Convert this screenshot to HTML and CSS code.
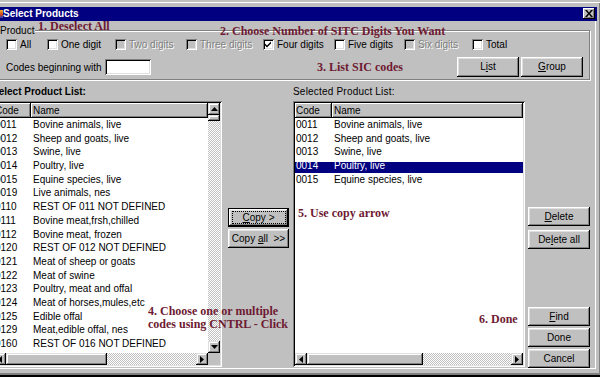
FILE: index.html
```html
<!DOCTYPE html>
<html>
<head>
<meta charset="utf-8">
<title>Select Products</title>
<link rel="stylesheet" href="styles.css">
</head>
<body>
<div class="window">
  <div class="titlebar">
    <span class="app-icon"></span>
    <span class="title">Select Products</span>
    <span class="close"><svg width="8" height="7" viewBox="0 0 8 7"><path d="M0 0h2l2 2.4L6 0h2L5 3.5 8 7H6L4 4.6 2 7H0l3-3.5z" fill="#000"/></svg></span>
  </div>
  <div class="panel">
    <div class="group">
      <span class="legend">Product</span>
      <div class="checks">
        <label class="chk"><span class="box"></span>All</label>
        <label class="chk"><span class="box"></span>One digit</label>
        <label class="chk disabled"><span class="box"></span>Two digits</label>
        <label class="chk disabled"><span class="box"></span>Three digits</label>
        <label class="chk"><span class="box"><svg width="7" height="7" viewBox="0 0 7 7"><path d="M0 2.5L2 4.5 6 0.5V2.5L2 6.5 0 4.5z" fill="#000"/></svg></span>Four digits</label>
        <label class="chk"><span class="box"></span>Five digits</label>
        <label class="chk disabled"><span class="box"></span>Six digits</label>
        <label class="chk"><span class="box"></span>Total</label>
      </div>
      <div class="codes-row">
        <span>Codes beginning with</span>
        <span class="input"></span>
        <div class="btn-pair">
          <button class="btn tall"><span>L<u>i</u>st</span></button>
          <button class="btn tall"><span><u>G</u>roup</span></button>
        </div>
      </div>
    </div>

    <div class="lists">
      <div class="list-col left">
        <div class="list-label strong">Select Product List:</div>
        <div class="listbox">
          <div class="lb-main">
            <div class="lb-head"><span class="hcell">Code</span><span class="hcell">Name</span></div>
            <div class="row"><span>0011</span><span>Bovine animals, live</span></div>
            <div class="row"><span>0012</span><span>Sheep and goats, live</span></div>
            <div class="row"><span>0013</span><span>Swine, live</span></div>
            <div class="row"><span>0014</span><span>Poultry, live</span></div>
            <div class="row"><span>0015</span><span>Equine species, live</span></div>
            <div class="row"><span>0019</span><span>Live animals, nes</span></div>
            <div class="row"><span>0110</span><span>REST OF 011 NOT DEFINED</span></div>
            <div class="row"><span>0111</span><span>Bovine meat,frsh,chilled</span></div>
            <div class="row"><span>0112</span><span>Bovine meat, frozen</span></div>
            <div class="row"><span>0120</span><span>REST OF 012 NOT DEFINED</span></div>
            <div class="row"><span>0121</span><span>Meat of sheep or goats</span></div>
            <div class="row"><span>0122</span><span>Meat of swine</span></div>
            <div class="row"><span>0123</span><span>Poultry, meat and offal</span></div>
            <div class="row"><span>0124</span><span>Meat of horses,mules,etc</span></div>
            <div class="row"><span>0125</span><span>Edible offal</span></div>
            <div class="row"><span>0129</span><span>Meat,edible offal, nes</span></div>
            <div class="row"><span>0160</span><span>REST OF 016 NOT DEFINED</span></div>
          </div>
          <div class="vscroll">
            <span class="sbtn"><svg width="7" height="4" viewBox="0 0 7 4"><path d="M0 4L3.5 0 7 4z" fill="#000"/></svg></span>
            <span class="thumb"></span>
            <span class="track"></span>
            <span class="sbtn"><svg width="7" height="4" viewBox="0 0 7 4"><path d="M0 0L3.5 4 7 0z" fill="#000"/></svg></span>
          </div>
          <div class="hscroll">
            <span class="sbtn"><svg width="4" height="7" viewBox="0 0 4 7"><path d="M4 0L0 3.5 4 7z" fill="#000"/></svg></span>
            <span class="thumb left-thumb"></span>
            <span class="track"></span>
            <span class="sbtn"><svg width="4" height="7" viewBox="0 0 4 7"><path d="M0 0L4 3.5 0 7z" fill="#000"/></svg></span>
          </div>
          <div class="corner"></div>
        </div>
      </div>

      <div class="mid-col">
        <button class="btn default"><span><u>C</u>opy &gt;</span></button>
        <button class="btn gap2"><span>Copy <u>a</u>ll &nbsp;&gt;&gt;</span></button>
      </div>

      <div class="list-col right">
        <div class="list-label">Selected Product List:</div>
        <div class="listbox noscroll">
          <div class="lb-main">
            <div class="lb-head"><span class="hcell">Code</span><span class="hcell">Name</span></div>
            <div class="row"><span>0011</span><span>Bovine animals, live</span></div>
            <div class="row"><span>0012</span><span>Sheep and goats, live</span></div>
            <div class="row"><span>0013</span><span>Swine, live</span></div>
            <div class="row sel"><span>0014</span><span>Poultry, live</span></div>
            <div class="row"><span>0015</span><span>Equine species, live</span></div>
          </div>
          <div class="hscroll">
            <span class="sbtn"><svg width="4" height="7" viewBox="0 0 4 7"><path d="M4 0L0 3.5 4 7z" fill="#000"/></svg></span>
            <span class="thumb right-thumb"></span>
            <span class="track"></span>
            <span class="sbtn"><svg width="4" height="7" viewBox="0 0 4 7"><path d="M0 0L4 3.5 0 7z" fill="#000"/></svg></span>
          </div>
        </div>
      </div>

      <div class="side-col">
        <button class="btn"><span><u>D</u>elete</span></button>
        <button class="btn gap4"><span>De<u>l</u>ete all</span></button>
        <button class="btn push"><span><u>F</u>ind</span></button>
        <button class="btn gap2"><span>Done</span></button>
        <button class="btn gap2"><span>Cancel</span></button>
      </div>
    </div>
  </div>

  <div class="note n1">1. Deselect All</div>
  <div class="note n2">2. Choose Number of SITC Digits You Want</div>
  <div class="note n3">3. List SIC codes</div>
  <div class="note n4">4. Choose one or multiple<br>codes using CNTRL - Click</div>
  <div class="note n5">5. Use copy arrow</div>
  <div class="note n6">6. Done</div>
</div>
</body>
</html>
```

FILE: styles.css
```css
* { box-sizing: border-box; }

html, body {
  margin: 0;
  padding: 0;
}

body {
  width: 600px;
  height: 377px;
  overflow: hidden;
  background: #c0c0c0;
  font-family: "Liberation Sans", Arial, sans-serif;
  font-size: 10px;
  color: #000;
}

.window {
  position: relative;
  width: 600px;
  height: 377px;
  padding: 7px 4px 8px 0;
  background: #c0c0c0;
  box-shadow: inset 0 2px #c0c0c0, inset 0 3px #fff, inset 0 -2px #000, inset 0 -4px #808080, inset -1px 0 #808080;
  display: flex;
  flex-direction: column;
  overflow: hidden;
}

/* ---------- title bar ---------- */
.titlebar {
  height: 14px;
  flex: none;
  margin-right: -1px;
  background: #000080;
  color: #fff;
  display: flex;
  align-items: flex-start;
}

.app-icon {
  width: 3px;
  height: 8px;
  margin-top: 3px;
  background: linear-gradient(#f0b030, #d04018 60%, #2040c0);
}

.title {
  font-weight: bold;
  line-height: 14px;
}

.close {
  margin: 1px 2px 0 auto;
  width: 12px;
  height: 11px;
  background: #c0c0c0;
  box-shadow: inset -1px -1px #000, inset 1px 1px #fff, inset -2px -2px #808080;
  display: flex;
  align-items: center;
  justify-content: center;
}

/* ---------- panel ---------- */
.panel {
  flex: 1;
  border-right: 1px solid #fff;
  border-bottom: 1px solid #fff;
  display: flex;
  flex-direction: column;
}

.group {
  position: relative;
  height: 50px;
  margin: 9px 5px 0 -6px;
  border: 1px solid #808080;
  box-shadow: inset 1px 1px #fff, 1px 1px #fff;
  padding: 8px 6px 2px 11px;
}

.legend {
  position: absolute;
  left: 5px;
  top: -6px;
  line-height: 12px;
  background: #c0c0c0;
  padding-right: 1px;
}

.checks {
  display: grid;
  grid-template-columns: 41px 68px 71px 77px 71px 70px 68px auto;
  height: 12px;
  line-height: 12px;
}

.chk {
  display: flex;
  align-items: flex-start;
  white-space: nowrap;
}

.box {
  width: 11px;
  height: 11px;
  margin-right: 3px;
  padding: 2px;
  flex: none;
  background: #fff;
  box-shadow: inset 1px 1px #808080, inset -1px -1px #fff, inset 2px 2px #000, inset -2px -2px #dfdfdf;
}

.box svg { display: block; }

.chk.disabled { color: #808080; text-shadow: 1px 1px #fff; }
.chk.disabled .box { background: #c0c0c0; }

.codes-row {
  display: flex;
  align-items: center;
  height: 20px;
  margin-top: 6px;
  white-space: nowrap;
}

.input {
  width: 46px;
  height: 16px;
  margin-left: 3px;
  background: #fff;
  box-shadow: inset 1px 1px #808080, inset -1px -1px #fff, inset 2px 2px #000, inset -2px -2px #dfdfdf;
}

.btn-pair {
  margin-left: auto;
  display: flex;
  gap: 2px;
}

/* ---------- buttons ---------- */
.btn {
  appearance: none;
  border: 0;
  margin: 0;
  padding: 0;
  font: inherit;
  color: #000;
  background: #c0c0c0;
  width: 62px;
  height: 19px;
  flex: none;
  line-height: 12px;
  white-space: nowrap;
  position: relative;
  display: flex;
  align-items: center;
  justify-content: center;
  box-shadow: inset -1px -1px #000, inset 1px 1px #fff, inset -2px -2px #808080, inset 2px 2px #dfdfdf;
}

.btn > span { white-space: pre; }

.btn.tall { height: 20px; }
.btn.gap2 { margin-top: 2px; }
.btn.gap4 { margin-top: 4px; }
.btn.push { margin-top: auto; }

.btn.default {
  box-shadow: inset 0 0 0 1px #000, inset -2px -2px #000, inset 2px 2px #fff, inset -3px -3px #808080, inset 3px 3px #dfdfdf;
}

.btn.default::after {
  content: "";
  position: absolute;
  top: 3px;
  right: 3px;
  bottom: 3px;
  left: 4px;
  border: 1px dotted #000;
}

/* ---------- lists area ---------- */
.lists {
  display: flex;
  height: 282px;
  margin: 6px 0 0 -8px;
}

.list-col {
  display: flex;
  flex-direction: column;
}

.list-col.left { width: 230px; }
.list-col.right { width: 232px; margin-left: 4px; }

.list-label {
  height: 12px;
  line-height: 12px;
  margin-bottom: 3px;
  white-space: nowrap;
  letter-spacing: 0.2px;
}

.list-label.strong { font-weight: bold; letter-spacing: 0; }

.listbox {
  height: 266px;
  padding: 2px;
  background: #fff;
  box-shadow: inset 1px 1px #808080, inset -1px -1px #fff, inset 2px 2px #000, inset -2px -2px #dfdfdf;
  display: grid;
  grid-template-columns: minmax(0, 1fr) 12px;
  grid-template-rows: minmax(0, 1fr) 12px;
}

.listbox.noscroll { grid-template-columns: minmax(0, 1fr); }

.lb-main {
  overflow: hidden;
  min-height: 0;
}

.lb-head {
  display: grid;
  grid-template-columns: 37px 1fr;
  height: 15px;
}

.hcell {
  background: #c0c0c0;
  line-height: 15px;
  padding-left: 1px;
  box-shadow: inset -1px -1px #000, inset 1px 1px #fff, inset -2px -2px #808080;
}

.hcell + .hcell { padding-left: 2px; }

.row {
  display: grid;
  grid-template-columns: 37px 1fr;
  height: 13.7px;
  line-height: 13.7px;
  white-space: nowrap;
}

.row span:first-child { padding-left: 1px; }
.row span + span { padding-left: 2px; }

.row.sel {
  color: #fff;
  background: linear-gradient(transparent 3px, #000080 3px);
}

/* ---------- scrollbars ---------- */
.vscroll {
  display: flex;
  flex-direction: column;
  min-height: 0;
}

.hscroll {
  display: flex;
  min-width: 0;
}

.sbtn {
  width: 12px;
  height: 12px;
  flex: none;
  background: #c0c0c0;
  display: flex;
  align-items: center;
  justify-content: center;
  box-shadow: inset -1px -1px #000, inset 1px 1px #dfdfdf, inset -2px -2px #808080, inset 2px 2px #fff;
}

.sbtn svg { display: block; }

.thumb {
  flex: none;
  background: #c0c0c0;
  box-shadow: inset -1px -1px #000, inset 1px 1px #dfdfdf, inset -2px -2px #808080, inset 2px 2px #fff;
}

.vscroll .thumb { height: 6px; }
.left-thumb { width: 101px; }
.right-thumb { width: 116px; }

.track {
  flex: 1;
  background: repeating-conic-gradient(#fff 0 25%, #c0c0c0 0 50%) 0 0 / 2px 2px;
}

.corner { background: #c0c0c0; }

/* ---------- side columns ---------- */
.mid-col {
  width: 61px;
  margin-left: 6px;
  padding-top: 122px;
  display: flex;
  flex-direction: column;
}

.mid-col .btn { width: 61px; }

.side-col {
  width: 62px;
  margin-left: 3px;
  padding-top: 121px;
  display: flex;
  flex-direction: column;
}

/* ---------- annotations ---------- */
.note {
  position: absolute;
  font-family: "Liberation Serif", "Times New Roman", serif;
  font-weight: bold;
  font-size: 12px;
  line-height: 12px;
  color: #6e1a32;
  white-space: nowrap;
}

.n1 { left: 38px; top: 20px; }
.n2 { left: 220px; top: 25px; }
.n3 { left: 317px; top: 60.5px; }
.n4 { left: 148px; top: 304.5px; line-height: 13px; }
.n5 { left: 298px; top: 207px; }
.n6 { left: 479px; top: 313px; }
```
